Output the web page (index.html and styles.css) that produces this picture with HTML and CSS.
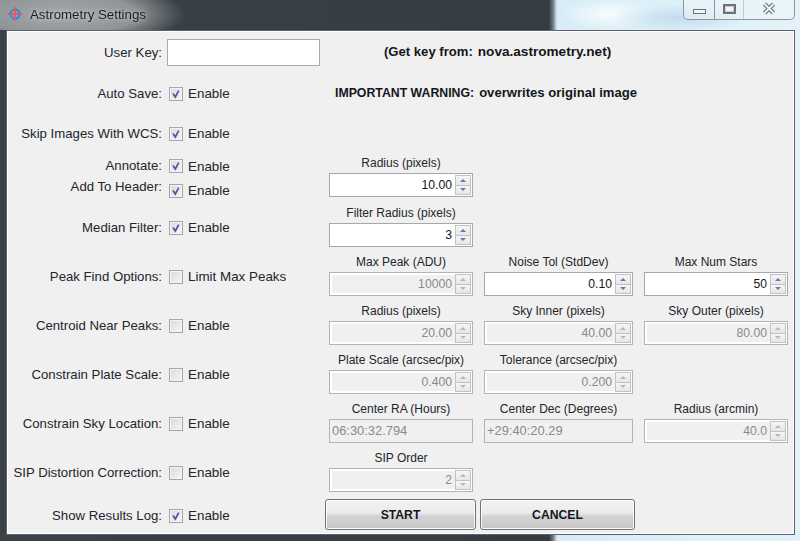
FILE: index.html
```html
<!DOCTYPE html>
<html lang="en">
<head>
<meta charset="utf-8">
<title>Astrometry Settings</title>
<link rel="stylesheet" href="styles.css">
</head>
<body>
<svg width="0" height="0" class="defs">
  <symbol id="check" viewBox="0 0 14 14"><path d="M3.5 6.5 L6.2 10.5 L10.2 3" fill="none" stroke="#4a5b9c" stroke-width="2"/></symbol>
</svg>
<div class="window">
  <header class="titlebar">
    <svg class="appicon" width="16" height="16" viewBox="0 0 16 16">
      <circle cx="8" cy="8" r="4.5" fill="none" stroke="#1f8fe0" stroke-width="2"/>
      <path d="M8 1V15M1 8H15" stroke="#f0505a" stroke-width="1.6"/>
    </svg>
    <span class="title">Astrometry Settings</span>
    <div class="controls">
      <div class="ctl ctl-min"><span class="glyph-min"></span></div>
      <div class="ctl ctl-max"><span class="glyph-max"></span></div>
      <div class="ctl ctl-close">
        <svg width="14" height="13" viewBox="0 0 14 13"><path d="M2.5 2 L11.5 11 M11.5 2 L2.5 11" stroke="#6d7478" stroke-width="4.4"/><path d="M2.5 2 L11.5 11 M11.5 2 L2.5 11" stroke="#eef1f2" stroke-width="2"/></svg>
      </div>
    </div>
  </header>
  <main class="panel">
    <section class="left">
      <div class="row r1"><span class="lbl">User Key:</span><div class="keybox"></div></div>
      <div class="row r2"><span class="lbl">Auto Save:</span><span class="cb"><svg><use href="#check"/></svg></span><span>Enable</span></div>
      <div class="row r3"><span class="lbl">Skip Images With WCS:</span><span class="cb"><svg><use href="#check"/></svg></span><span>Enable</span></div>
      <div class="row r4"><span class="lbl lift1">Annotate:</span><span class="cb"><svg><use href="#check"/></svg></span><span>Enable</span></div>
      <div class="row r5"><span class="lbl lift">Add To Header:</span><span class="cb"><svg><use href="#check"/></svg></span><span>Enable</span></div>
      <div class="row r6"><span class="lbl">Median Filter:</span><span class="cb"><svg><use href="#check"/></svg></span><span>Enable</span></div>
      <div class="row r7"><span class="lbl">Peak Find Options:</span><span class="cb"></span><span>Limit Max Peaks</span></div>
      <div class="row r6"><span class="lbl">Centroid Near Peaks:</span><span class="cb"></span><span>Enable</span></div>
      <div class="row r7"><span class="lbl">Constrain Plate Scale:</span><span class="cb"></span><span>Enable</span></div>
      <div class="row r6"><span class="lbl">Constrain Sky Location:</span><span class="cb"></span><span>Enable</span></div>
      <div class="row r7"><span class="lbl">SIP Distortion Correction:</span><span class="cb"></span><span>Enable</span></div>
      <div class="row r8"><span class="lbl">Show Results Log:</span><span class="cb"><svg><use href="#check"/></svg></span><span>Enable</span></div>
    </section>
    <section class="right">
      <div class="note note1"><b class="n-a">(Get key from:</b> <b class="n-d">nova.astrometry.net)</b></div>
      <div class="note note2"><b class="n-c">IMPORTANT WARNING:</b> <b class="n-b">overwrites original image</b></div>
      <div class="fields">
        <div class="field"><label>Radius (pixels)</label><div class="spin on"><span class="val">10.00</span><span class="arrows"><i class="up"></i><i class="dn"></i></span></div></div>
      </div>
      <div class="fields second">
        <div class="field"><label>Filter Radius (pixels)</label><div class="spin on"><span class="val">3</span><span class="arrows"><i class="up"></i><i class="dn"></i></span></div></div>
      </div>
      <div class="fields">
        <div class="field"><label>Max Peak (ADU)</label><div class="spin"><span class="val">10000</span><span class="arrows"><i class="up"></i><i class="dn"></i></span></div></div>
        <div class="field"><label>Noise Tol (StdDev)</label><div class="spin on"><span class="val">0.10</span><span class="arrows"><i class="up"></i><i class="dn"></i></span></div></div>
        <div class="field"><label>Max Num Stars</label><div class="spin on"><span class="val">50</span><span class="arrows"><i class="up"></i><i class="dn"></i></span></div></div>
      </div>
      <div class="fields">
        <div class="field"><label>Radius (pixels)</label><div class="spin"><span class="val">20.00</span><span class="arrows"><i class="up"></i><i class="dn"></i></span></div></div>
        <div class="field"><label>Sky Inner (pixels)</label><div class="spin"><span class="val">40.00</span><span class="arrows"><i class="up"></i><i class="dn"></i></span></div></div>
        <div class="field"><label>Sky Outer (pixels)</label><div class="spin"><span class="val">80.00</span><span class="arrows"><i class="up"></i><i class="dn"></i></span></div></div>
      </div>
      <div class="fields">
        <div class="field"><label>Plate Scale (arcsec/pix)</label><div class="spin"><span class="val">0.400</span><span class="arrows"><i class="up"></i><i class="dn"></i></span></div></div>
        <div class="field"><label>Tolerance (arcsec/pix)</label><div class="spin"><span class="val">0.200</span><span class="arrows"><i class="up"></i><i class="dn"></i></span></div></div>
      </div>
      <div class="fields">
        <div class="field"><label>Center RA (Hours)</label><div class="text">06:30:32.794</div></div>
        <div class="field"><label>Center Dec (Degrees)</label><div class="text">+29:40:20.29</div></div>
        <div class="field"><label>Radius (arcmin)</label><div class="spin"><span class="val">40.0</span><span class="arrows"><i class="up"></i><i class="dn"></i></span></div></div>
      </div>
      <div class="fields">
        <div class="field"><label>SIP Order</label><div class="spin"><span class="val">2</span><span class="arrows"><i class="up"></i><i class="dn"></i></span></div></div>
      </div>
      <div class="buttons">
        <button class="btn start">START</button>
        <button class="btn cancel">CANCEL</button>
      </div>
    </section>
  </main>
</div>
</body>
</html>
```

FILE: styles.css
```css
* { box-sizing: border-box; }
html, body { margin: 0; padding: 0; }
body {
  width: 800px;
  height: 541px;
  overflow: hidden;
  font-family: "Liberation Sans", Arial, sans-serif;
  font-size: 13.4px;
  color: #23252b;
  background:
    radial-gradient(ellipse 70px 14px at 680px 18px, #c2dcee 0, rgba(194,220,238,0) 100%),
    radial-gradient(ellipse 50px 16px at 610px 14px, #f8fcfe 0, rgba(248,252,254,0) 100%),
    linear-gradient(to right, #3a4148 0, #353c43 549px, #6d7a80 553px, #d8ecf7 557px, #e4f3fa 800px);
}
.defs { position: absolute; }
.window { position: relative; width: 800px; height: 541px; display: flex; flex-direction: column; filter: blur(.3px); }

.titlebar {
  height: 30px;
  flex: none;
  position: relative;
  display: flex;
  align-items: center;
  padding: 0 0 2px 7px;
  background: radial-gradient(ellipse 125px 36px at 60px 14px, #a4a8aa 0, #8f9496 60%, rgba(80,86,90,0) 100%);
}
.appicon { flex: none; }
.title { margin-left: 7px; font-size: 13.3px; color: #1d2024; text-shadow: 0 0 5px rgba(255,255,255,.7); }
.controls {
  position: absolute;
  right: 5px;
  top: 0;
  width: 112px;
  height: 20px;
  display: flex;
  border: 1px solid #8d979c;
  border-top: 0;
  border-radius: 0 0 5px 5px;
  background: rgba(235,245,250,.55);
}
.ctl { display: flex; align-items: center; justify-content: center; }
.ctl-min { width: 31px; border-right: 1px solid #8d979c; padding-top: 4px; }
.ctl-max { width: 29px; border-right: 1px solid #c4ccd0; padding-bottom: 2px; }
.ctl-close { flex: 1; padding-bottom: 2px; }
.glyph-min { width: 13px; height: 5px; border: 1px solid #6a7276; background: #f2f4f5; }
.glyph-max { width: 13px; height: 10px; border: 2px solid #6a7276; background: #f2f4f5; box-shadow: inset 0 0 0 1px #c8cdd0; }

.panel {
  margin: 0 5px 0 6px;
  height: 505px;
  flex: none;
  display: flex;
  background: #f0f0f0;
  border: 1px solid #5d6266;
  box-shadow: inset 0 0 0 1px #fff;
  padding-top: 5px;
}
.left { width: 322px; flex: none; display: flex; flex-direction: column; }
.row { display: flex; align-items: center; flex: none; }
.lbl { width: 155px; flex: none; text-align: right; white-space: nowrap; font-size: 13.2px; }
.lift { position: relative; top: -4px; }
.lift1 { position: relative; top: -1px; }
.cb {
  width: 14px;
  height: 14px;
  flex: none;
  margin: 0 5px 0 7px;
  border: 1px solid #a6a6a6;
  background: linear-gradient(135deg, #d9d9d9, #f7f7f7);
  box-shadow: inset 0 0 0 1px #f4f4f4;
}
.r6 .cb, .r7 .cb, .r8 .cb { margin-top: 2px; }
.cb svg { display: block; width: 12px; height: 12px; }
.r1 { height: 32px; }
.r2 { height: 51px; }
.r3 { height: 29px; }
.r4 { height: 36px; }
.r5 { height: 13px; }
.r6 { height: 60px; }
.r7 { height: 38px; }
.r8 { height: 44px; padding-top: 4px; }
.keybox {
  width: 153px;
  height: 27px;
  margin-left: 5px;
  background: #fff;
  border: 1px solid #a9a9a9;
}

.right { flex: 1; display: flex; flex-direction: column; padding-top: 0; }
.note { color: #14161a; white-space: nowrap; display: flex; gap: 5px; }
.note1 { height: 32px; line-height: 32px; padding-left: 55px; font-size: 13.2px; }
.note2 { height: 50px; line-height: 50px; padding-left: 6px; }
.n-a { font-size: 13.1px; }
.n-b { font-size: 13.1px; }
.n-c { font-size: 12.3px; }
.n-d { font-size: 13.6px; }
.fields { display: flex; gap: 11px; margin-top: 7px; }
.note2 + .fields { margin-top: 37px; }
.second { margin-top: 8px; }
.field { width: 144px; display: flex; flex-direction: column; align-items: center; }
.field:nth-child(2) { width: 149px; }
.field label { height: 18px; line-height: 17px; font-size: 12px; white-space: nowrap; }
.spin, .text { width: 100%; height: 24px; }
.spin {
  display: flex;
  align-items: center;
  border: 1px solid #b4b4b4;
  padding: 2px 1px 2px 2px;
  background: #fff;
  color: #8a8a8a;
  font-size: 12.2px;
}
.spin .val {
  flex: 1;
  height: 18px;
  line-height: 18px;
  text-align: right;
  background: #f0f0f0;
  padding-right: 3px;
}
.spin.on { color: #15171b; border-color: #a8a8a8; }
.spin.on .val { background: #fff; }
.arrows { width: 16px; height: 20px; display: flex; flex-direction: column; flex: none; }
.arrows i {
  flex: 1;
  display: flex;
  align-items: center;
  justify-content: center;
  border: 1px solid #c2c2c2;
  background: linear-gradient(#f6f6f6, #e6e6e6);
}
.arrows i + i { border-top: 0; }
.arrows i::before {
  content: "";
  width: 0;
  height: 0;
  border-left: 3.5px solid transparent;
  border-right: 3.5px solid transparent;
}
.up::before { border-bottom: 3px solid #b8b8b8; }
.dn::before { border-top: 3px solid #b8b8b8; }
.on .up::before { border-bottom-color: #6478b8; }
.on .dn::before { border-top-color: #6478b8; }
.text {
  border: 1px solid #b4b4b4;
  background: #f0f0f0;
  color: #8a8a8a;
  font-size: 12.9px;
  line-height: 22px;
  padding-left: 2px;
}
.buttons { display: flex; gap: 4px; margin-top: 7px; margin-left: -4px; }
.btn {
  height: 31px;
  padding: 0;
  font-family: inherit;
  font-size: 12.2px;
  font-weight: bold;
  color: #15171b;
  border: 1px solid #6f7376;
  border-radius: 3px;
  background: linear-gradient(#f2f2f2 0, #ebebeb 45%, #d4d4d4 55%, #c6c6c6 100%);
  box-shadow: inset 0 0 0 1px #fafafa;
}
.start { width: 151px; }
.cancel { width: 155px; }
```
